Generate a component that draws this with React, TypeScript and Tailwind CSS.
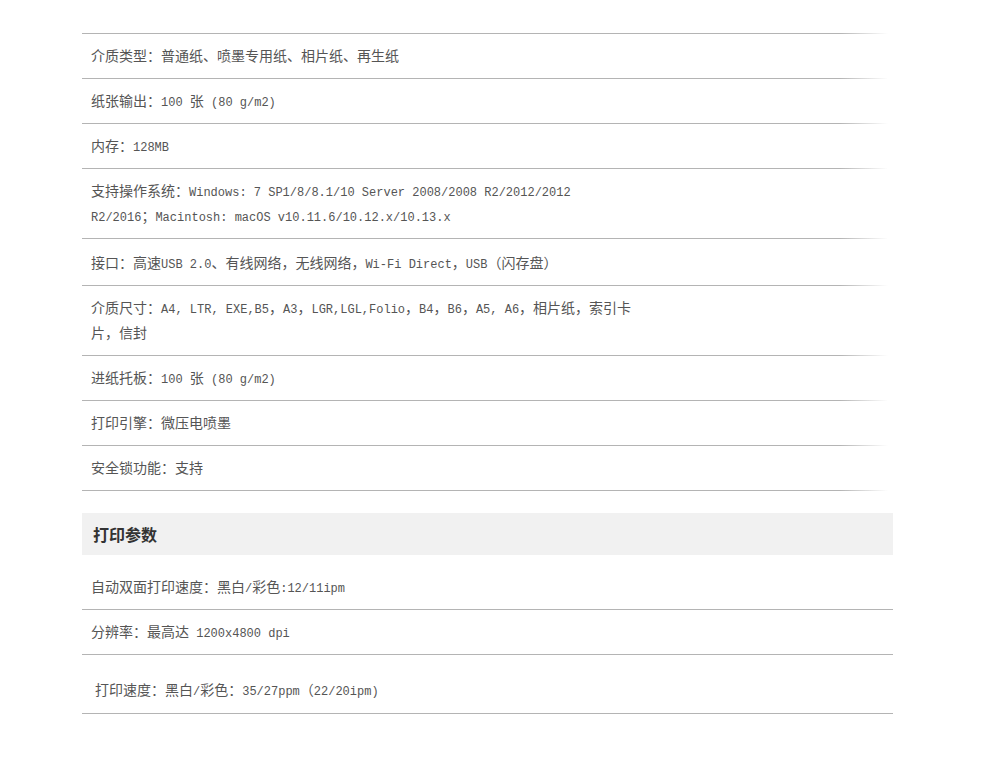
import React from "react";

function Mixed({ text }: { text: string }) {
  const parts = text.match(/[\x20-\x7e]+|[^\x20-\x7e]+/g) || [];
  return (
    <>
      {parts.map((p, i) =>
        /^[\x20-\x7e]+$/.test(p) ? (
          <span key={i} className="font-['Liberation_Mono',monospace] text-[12px] leading-none whitespace-pre">
            {p}
          </span>
        ) : (
          <span key={i}>{p}</span>
        )
      )}
    </>
  );
}

function FadeLine() {
  return <div className="h-px w-full bg-[linear-gradient(to_right,#b4b4b4_0%,#b4b4b4_94%,rgba(180,180,180,0)_100%)]" />;
}

function SolidLine() {
  return <div className="h-px w-full bg-[#b4b4b4]" />;
}

const topRows: { lines: string[]; pad?: string }[] = [
  { lines: ["介质类型：普通纸、喷墨专用纸、相片纸、再生纸"] },
  { lines: ["纸张输出：100 张 (80 g/m2)"] },
  { lines: ["内存：128MB"] },
  {
    lines: [
      "支持操作系统：Windows: 7 SP1/8/8.1/10 Server 2008/2008 R2/2012/2012",
      "R2/2016；Macintosh: macOS v10.11.6/10.12.x/10.13.x",
    ],
  },
  { lines: ["接口：高速USB 2.0、有线网络，无线网络，Wi-Fi Direct，USB（闪存盘）"], pad: "pt-[11px] pb-[10px]" },
  {
    lines: ["介质尺寸：A4, LTR, EXE,B5，A3，LGR,LGL,Folio，B4，B6，A5, A6，相片纸，索引卡", "片，信封"],
  },
  { lines: ["进纸托板：100 张 (80 g/m2)"] },
  { lines: ["打印引擎：微压电喷墨"] },
  { lines: ["安全锁功能：支持"] },
];

export default function App() {
  return (
    <div className="w-[990px] h-[761px] overflow-hidden bg-white font-['Noto_Sans_CJK_SC',sans-serif] text-[14px] text-[#555]">
      <div className="pl-[82px] pt-[33px]">
        <div className="w-[806px]">
          <FadeLine />
          {topRows.map((r, i) => (
            <div key={i}>
              <div className={`${r.pad ?? "pt-[9px] pb-[10px]"} pl-[9px] leading-[25px] whitespace-nowrap`}>
                {r.lines.map((l, j) => (
                  <div key={j}>
                    <Mixed text={l} />
                  </div>
                ))}
              </div>
              <FadeLine />
            </div>
          ))}
        </div>

        <div className="w-[811px] mt-[22px]">
          <div className="h-[42px] bg-[#f1f1f1] flex items-center pl-[11px] text-[16px] font-bold text-[#333]">
            打印参数
          </div>
          <div className="mt-[10px]">
            <div className="pt-[9px] pb-[10px] pl-[9px] leading-[25px] whitespace-nowrap">
              <Mixed text="自动双面打印速度：黑白/彩色:12/11ipm" />
            </div>
            <SolidLine />
            <div className="pt-[9px] pb-[10px] pl-[9px] leading-[25px] whitespace-nowrap">
              <Mixed text="分辨率：最高达 1200x4800 dpi" />
            </div>
            <SolidLine />
            <div className="pt-[22px] pb-[11px] pl-[13px] leading-[25px] whitespace-nowrap">
              <Mixed text="打印速度：黑白/彩色：35/27ppm（22/20ipm)" />
            </div>
            <SolidLine />
          </div>
        </div>
      </div>
    </div>
  );
}
